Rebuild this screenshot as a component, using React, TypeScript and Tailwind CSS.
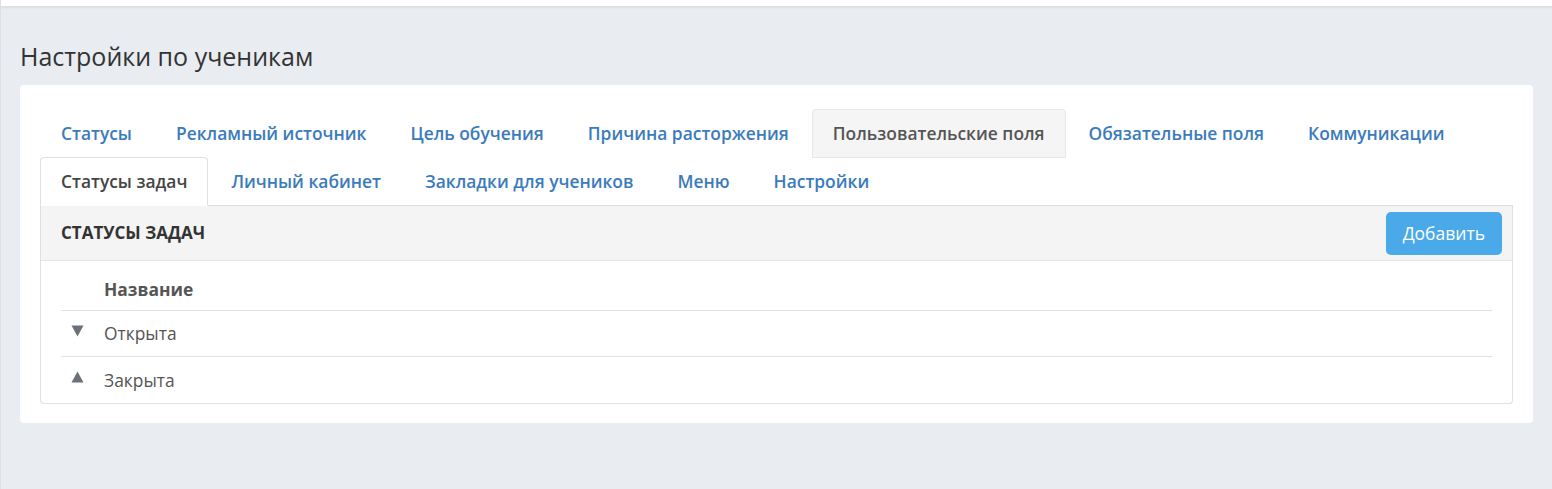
const TABS_ROW1 = [
  "Статусы",
  "Рекламный источник",
  "Цель обучения",
  "Причина расторжения",
  "Пользовательские поля",
  "Обязательные поля",
  "Коммуникации",
];

const TABS_ROW2 = ["Статусы задач", "Личный кабинет", "Закладки для учеников", "Меню", "Настройки"];

const STATUSES = [
  { name: "Открыта", dir: "down" },
  { name: "Закрыта", dir: "up" },
];

function Tab({ label, state }: { label: string; state?: "active" | "hover" }) {
  const base =
    "mr-[2px] mb-[-1px] block h-[49px] rounded-t-[4px] border px-[20px] text-[17.4px] leading-[47px] font-semibold whitespace-nowrap";
  if (state === "active") {
    return <span className={`${base} border-[#dddfe3] border-b-transparent bg-white text-[#444]`}>{label}</span>;
  }
  if (state === "hover") {
    return <span className={`${base} border-[#e4e6ea] bg-[#f5f5f5] text-[#555]`}>{label}</span>;
  }
  return <span className={`${base} border-transparent text-[#3b7bbb]`}>{label}</span>;
}

function Triangle({ dir }: { dir: string }) {
  return (
    <svg width="13" height="12" viewBox="0 0 13 12" className="text-[#6b7079]">
      {dir === "down" ? (
        <path d="M0.5 0.5h12L6.5 11.5z" fill="currentColor" />
      ) : (
        <path d="M0.5 11.5h12L6.5 0.5z" fill="currentColor" />
      )}
    </svg>
  );
}

export default function App() {
  return (
    <div className="min-h-[489px] border-l border-[#dde0e5] bg-[#e9ecf1] font-['Open_Sans',sans-serif]">
      <div className="h-[7px] border-b border-[#dcdfe3] bg-white shadow-[0_1px_2px_rgba(0,0,0,0.06)]" />

      <div className="px-[19px] pb-[66px]">
        <h1 className="pt-[33px] pb-[13px] text-[25px] leading-[32px] text-[#333]">Настройки по ученикам</h1>

        <div className="rounded-[4px] bg-white px-[20px] pt-[24px] pb-[19px]">
          <div className="flex flex-wrap border-b border-[#dddfe3]">
            {TABS_ROW1.map((t) => (
              <Tab key={t} label={t} state={t === "Пользовательские поля" ? "hover" : undefined} />
            ))}
            {TABS_ROW2.map((t) => (
              <Tab key={t} label={t} state={t === "Статусы задач" ? "active" : undefined} />
            ))}
          </div>

          <div className="rounded-b-[4px] border border-t-0 border-[#dddfe3]">
            <div className="flex h-[55px] items-center justify-between border-b border-[#e2e4e8] bg-[#f4f4f4] pr-[10px] pl-[20px]">
              <h2 className="text-[17px] font-bold uppercase text-[#333]">Статусы задач</h2>
              <button className="h-[43px] rounded-[5px] bg-[#4aa9e9] px-[17px] text-[17.5px] text-white">Добавить</button>
            </div>

            <div className="px-[20px] pt-[8px]">
              <div className="flex h-[42px] items-center border-b border-[#dfe1e5] pl-[43px] text-[17.4px] font-bold text-[#555]">
                Название
              </div>
              {STATUSES.map((s, i) => (
                <div
                  key={s.name}
                  className={`flex h-[46px] items-center text-[17.4px] text-[#555] ${
                    i < STATUSES.length - 1 ? "border-b border-[#dfe1e5]" : ""
                  }`}
                >
                  <span className="flex w-[43px] pb-[6px] pl-[10px]">
                    <Triangle dir={s.dir} />
                  </span>
                  {s.name}
                </div>
              ))}
            </div>
          </div>
        </div>
      </div>
    </div>
  );
}
